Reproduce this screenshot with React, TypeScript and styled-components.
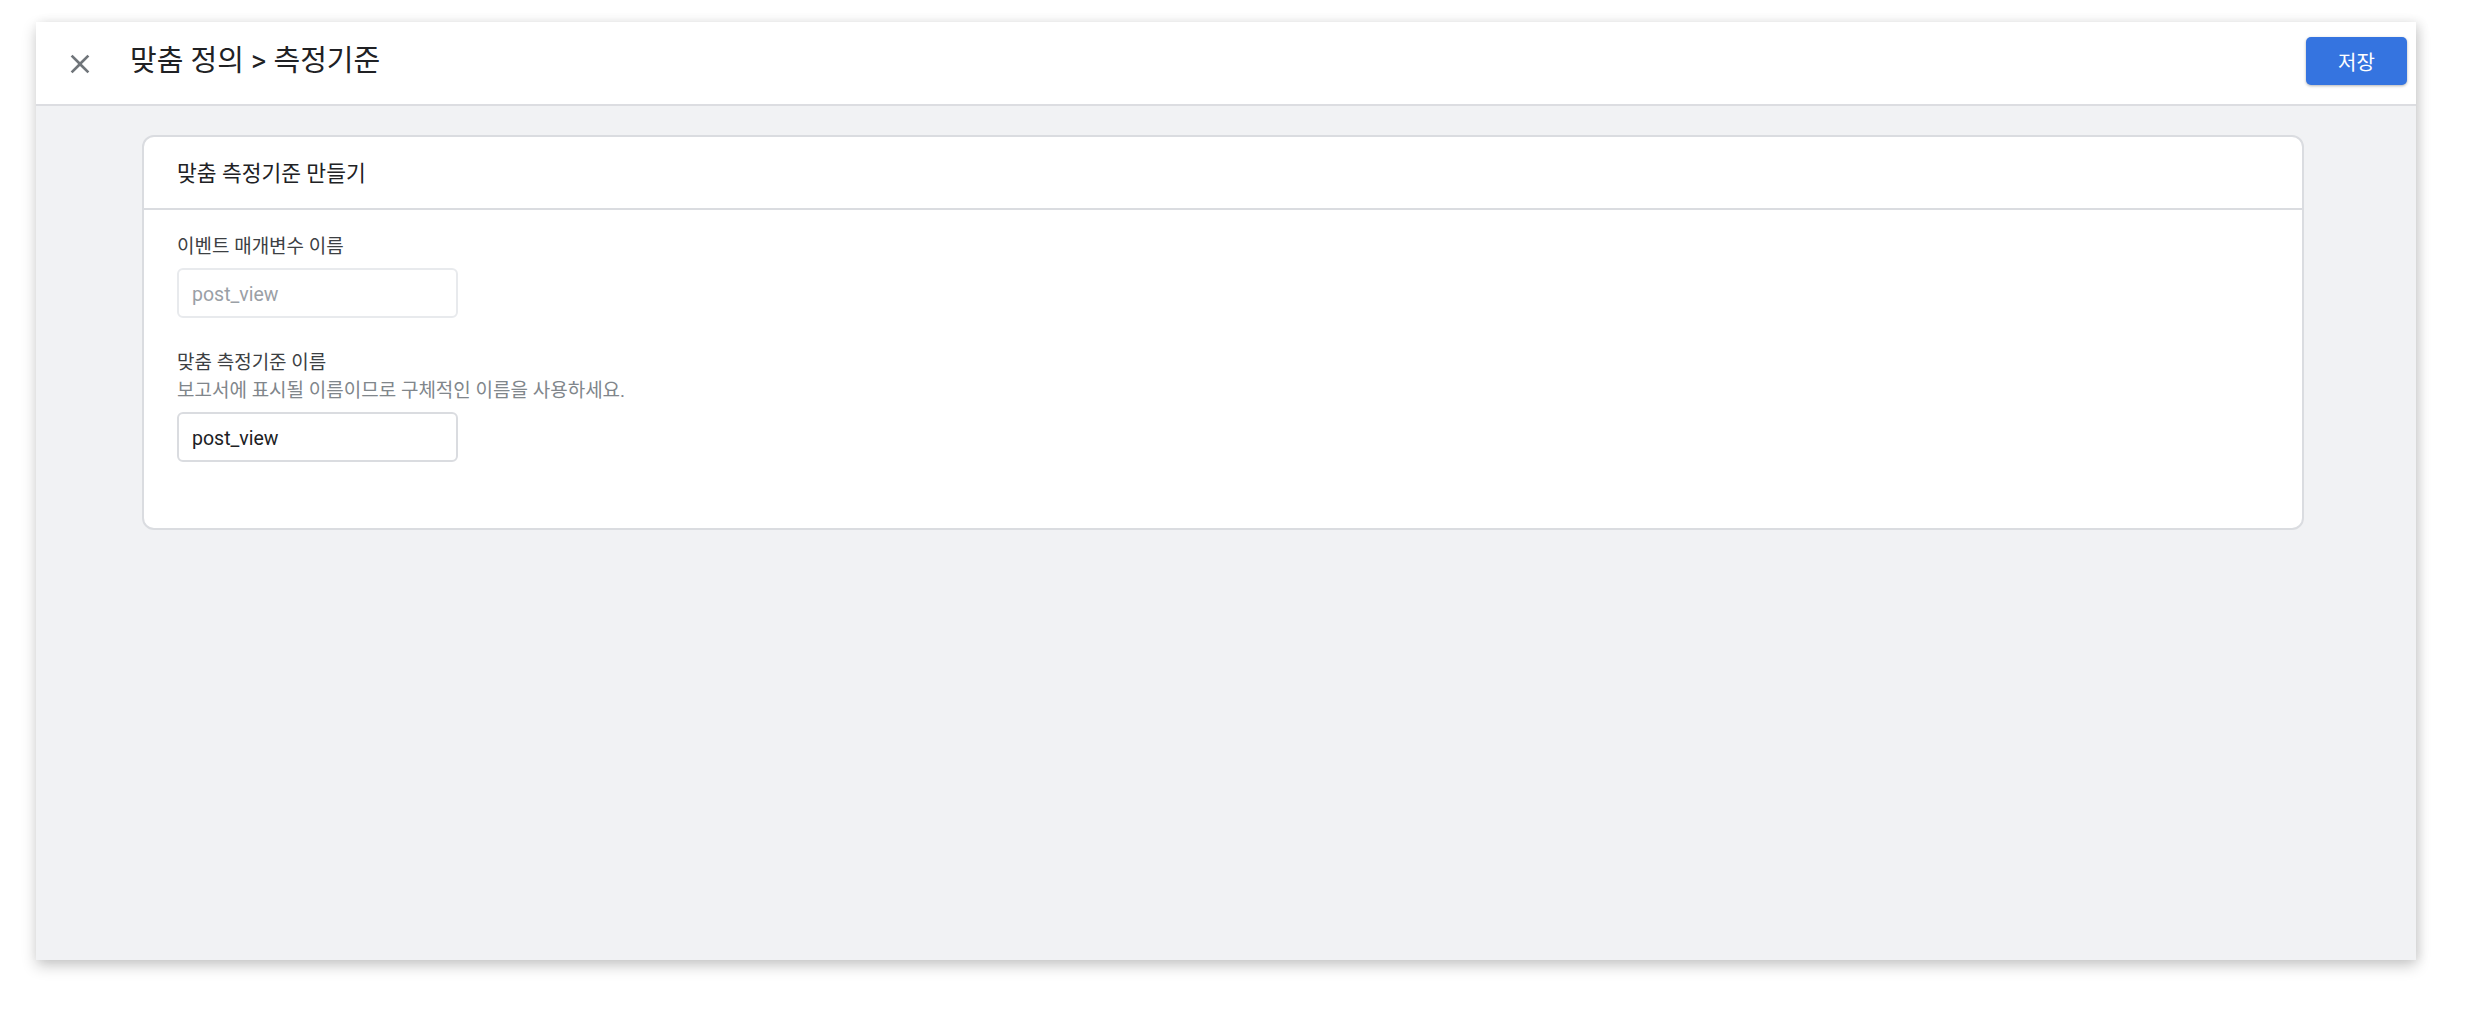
import React from 'react'
import styled, { createGlobalStyle } from 'styled-components'

const GlobalStyle = createGlobalStyle`
  html, body {
    margin: 0;
    padding: 0;
    background: #ffffff;
    font-family: Roboto, "Noto Sans CJK KR", "Noto Sans", sans-serif;
    color: #202124;
  }
  * { box-sizing: border-box; }
`

const Page = styled.div`
  width: 2466px;
  height: 1014px;
  padding: 22px 50px 0 36px;
`

const Panel = styled.div`
  width: 2380px;
  height: 938px;
  background: #f1f2f4;
  box-shadow: 0 6px 14px rgba(0, 0, 0, 0.2), 4px 0 10px rgba(0, 0, 0, 0.08);
  display: flex;
  flex-direction: column;
`

const Toolbar = styled.header`
  height: 84px;
  flex-shrink: 0;
  background: #ffffff;
  border-bottom: 2px solid #dcdde1;
  display: flex;
  align-items: center;
  padding: 0 9px 4px 28px;
`

const CloseButton = styled.button`
  width: 32px;
  height: 32px;
  padding: 0;
  margin: 6px 34px 0 0;
  border: none;
  background: transparent;
  display: flex;
  align-items: center;
  justify-content: center;
  cursor: pointer;
`

const Title = styled.h1`
  margin: 0;
  font-size: 29px;
  font-weight: 400;
  line-height: 36px;
  color: #202124;
  flex: 1;
`

const SaveButton = styled.button`
  width: 101px;
  height: 48px;
  border: none;
  border-radius: 5px;
  background: #3574e0;
  color: #ffffff;
  font-family: inherit;
  font-size: 20px;
  box-shadow: 0 1px 3px rgba(0, 0, 0, 0.3);
  cursor: pointer;
`

const Content = styled.main`
  padding: 29px 112px 0 106px;
`

const Card = styled.section`
  background: #ffffff;
  border: 2px solid #dadce0;
  border-radius: 12px;
`

const CardHeader = styled.div`
  height: 73px;
  border-bottom: 2px solid #dadce0;
  display: flex;
  align-items: center;
  padding: 0 33px 2px;
`

const CardTitle = styled.h2`
  margin: 0;
  font-size: 21.5px;
  font-weight: 400;
  color: #202124;
`

const CardBody = styled.div`
  padding: 22px 33px 66px;
  display: flex;
  flex-direction: column;
  gap: 30px;
`

const Field = styled.div`
  display: flex;
  flex-direction: column;
`

const Label = styled.label`
  font-size: 19px;
  line-height: 29px;
  color: #3c4043;
`

const Hint = styled.div`
  font-size: 19px;
  line-height: 28px;
  color: #80868b;
`

const TextInput = styled.input<{ $muted?: boolean }>`
  width: 281px;
  height: 50px;
  margin-top: 7px;
  padding: 2px 13px 0;
  border: 2px solid ${({ $muted }) => ($muted ? '#e8eaed' : '#dadce0')};
  border-radius: 6px;
  background: #ffffff;
  font-family: inherit;
  font-size: 19.5px;
  color: ${({ $muted }) => ($muted ? '#9aa0a6' : '#202124')};
  outline: none;
`

const CloseIcon = () => (
  <svg width="32" height="32" viewBox="0 0 24 24">
    <path
      fill="#70757a"
      d="M19 6.41 17.59 5 12 10.59 6.41 5 5 6.41 10.59 12 5 17.59 6.41 19 12 13.41 17.59 19 19 17.59 13.41 12z"
    />
  </svg>
)

export default function App() {
  return (
    <>
      <GlobalStyle />
      <Page>
        <Panel>
          <Toolbar>
            <CloseButton aria-label="닫기">
              <CloseIcon />
            </CloseButton>
            <Title>맞춤 정의 &gt; 측정기준</Title>
            <SaveButton>저장</SaveButton>
          </Toolbar>
          <Content>
            <Card>
              <CardHeader>
                <CardTitle>맞춤 측정기준 만들기</CardTitle>
              </CardHeader>
              <CardBody>
                <Field>
                  <Label>이벤트 매개변수 이름</Label>
                  <TextInput $muted disabled value="post_view" readOnly />
                </Field>
                <Field>
                  <Label>맞춤 측정기준 이름</Label>
                  <Hint>보고서에 표시될 이름이므로 구체적인 이름을 사용하세요.</Hint>
                  <TextInput defaultValue="post_view" />
                </Field>
              </CardBody>
            </Card>
          </Content>
        </Panel>
      </Page>
    </>
  )
}
